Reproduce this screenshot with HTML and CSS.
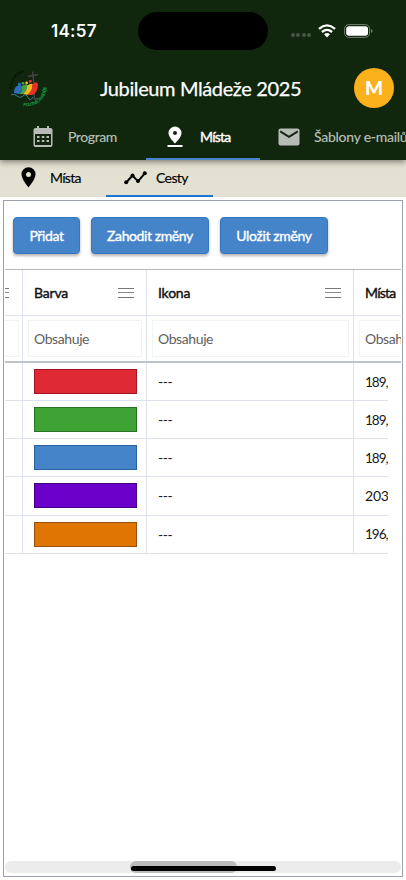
FILE: index.html
```
<!DOCTYPE html>
<html lang="cs">
<head>
<meta charset="utf-8">
<title>Jubileum Mládeže 2025</title>
<link rel="stylesheet" href="styles.css">
</head>
<body>
<header class="top">
  <div class="status">
    <span class="clock">14:57</span>
    <span class="island"></span>
    <span class="dots"><i></i><i></i><i></i><i></i></span>
    <svg class="wifi" width="18" height="14" viewBox="0 0 18 14" fill="none" stroke="#fff" stroke-width="2.3"><path d="M1 4.8Q9-2 17 4.8M3.9 8Q9 3.8 14.1 8"/><path d="M6 10.2Q9 7.8 12 10.2L9 13.4Z" fill="#fff" stroke="none"/></svg>
    <svg class="battery" width="29" height="14" viewBox="0 0 29 14"><rect x=".6" y=".6" width="25" height="12.8" rx="4.2" fill="none" stroke="#758072"/><rect x="2.2" y="2.2" width="21.8" height="9.6" rx="2.8" fill="#fff"/><path d="M27 5v4q1.5-.6 1.5-2T27 5" fill="#758072"/></svg>
  </div>
  <div class="brand">
    <svg class="logo" width="40" height="40" viewBox="0 0 40 40">
      <defs>
        <path id="arc-bottom" d="M14 38A20 20 0 0 0 37 13"/>
        <path id="arc-top" d="M2.500 21A17.500 17.500 0 0 1 20 3.200"/>
      </defs>
      <path d="M23.600 3.500L24.800 15M19 8.500l10-2M25 25l.5 6q2 0 3-1" fill="none" stroke="#454545" stroke-width="1.500"/>
      <path d="M5 25Q5 18 10 17Q15 17 13 21L10 26Z" fill="#2b6fc0"/>
      <path d="M10 26Q14 22 13 18Q17 15 20 18Q19 24 14 26Z" fill="#44a145"/>
      <path d="M14 26Q19 22 18 18Q22 14 25 17Q25 24 18 27Z" fill="#f2b820"/>
      <path d="M18 27Q24 22 23 17Q27 12 29 16Q29 25 23 27Z" fill="#e63225"/>
      <circle cx="10.400" cy="16" r="1.500" fill="#2b6fc0"/><circle cx="14" cy="15.300" r="1.400" fill="#44a145"/><circle cx="17.600" cy="15" r="1.400" fill="#f2b820"/><circle cx="21.300" cy="13.300" r="1.500" fill="#e63225"/>
      <path d="M2 27q3-2 6 1t6 0t5 1.500t5-.5" fill="none" stroke="#397c8c" stroke-width="1"/>
      <text class="motto"><textPath href="#arc-bottom">POUTNÍCI NADĚJE</textPath></text>
      <text class="year"><textPath href="#arc-top">JUBILEUM 2025</textPath></text>
    </svg>
    <h1>Jubileum Mládeže 2025</h1>
    <span class="avatar">M</span>
  </div>
  <nav class="tabs">
    <a class="tab program"><svg width="20" height="22" viewBox="0 0 20 22"><path fill="#b7bdb6" fill-rule="evenodd" d="M4 0h2v2h8V0h2v2h1.500Q19.500 2 19.500 4v15q0 2-2 2h-15q-2 0-2-2V4q0-2 2-2H4ZM2 8v11h16V8Z"/><path fill="#b7bdb6" d="M4 10h2.500v2H4zM8.800 10h2.500v2H8.800zM13.500 10H16v2h-2.500zM4 14h2.500v2H4zM8.800 14h2.500v2H8.800zM13.500 14H16v2h-2.500z"/></svg><span>Program</span></a>
    <a class="tab places active"><svg width="16" height="22" viewBox="0 0 16 22" fill="#fff"><path fill-rule="evenodd" d="M8 .5a6.500 6.500 0 0 0-6.500 6.500C1.500 11.500 8 17.500 8 17.500S14.500 11.500 14.500 7A6.500 6.500 0 0 0 8 .5Zm0 4.500a2 2 0 1 1 0 4 2 2 0 0 1 0-4Z"/><path d="M.5 19h15v2H.5z"/></svg><span>Místa</span></a>
    <a class="tab mails"><svg width="22" height="18" viewBox="0 0 22 18"><rect x=".5" y=".5" width="21" height="17" rx="2" fill="#b7bdb6"/><path d="M2.200 3.400L11 8.800l8.800-5.400" fill="none" stroke="#10260d" stroke-width="1.900"/></svg><span>Šablony e-mailů</span></a>
  </nav>
</header>
<nav class="subtabs">
  <a class="sub pin"><svg width="15" height="21" viewBox="0 0 15 21"><path fill-rule="evenodd" d="M7.500.3A7 7 0 0 0 .5 7.300C.5 12.500 7.500 20.300 7.500 20.300S14.500 12.500 14.500 7.300A7 7 0 0 0 7.500.3Zm0 4.600a2.500 2.500 0 1 1 0 5 2.500 2.500 0 0 1 0-5Z"/></svg><span>Místa</span></a>
  <a class="sub routes"><svg width="23" height="14" viewBox="0 0 23 14"><path d="M2.200 11.500L8.500 4.500l5.500 5.800L20.800 2.300" fill="none" stroke="#000" stroke-width="1.900"/><circle cx="2.200" cy="11.300" r="2"/><circle cx="8.500" cy="4.500" r="2"/><circle cx="14" cy="10" r="2"/><circle cx="20.800" cy="2.300" r="2"/></svg><span>Cesty</span></a>
</nav>
<main class="panel">
  <div class="toolbar">
    <button class="add"><span>Přidat</span></button>
    <button class="discard"><span>Zahodit změny</span></button>
    <button class="save"><span>Uložit změny</span></button>
  </div>
  <section class="table">
    <div class="row head"><div class="cell"><i class="menu"></i></div><div class="cell"><b>Barva</b><i class="menu"></i></div><div class="cell"><b>Ikona</b><i class="menu"></i></div><div class="cell"><b class="mista">Místa</b></div></div>
    <div class="row filter"><div class="cell"><span class="field"></span></div><div class="cell"><span class="field">Obsahuje</span></div><div class="cell"><span class="field">Obsahuje</span></div><div class="cell"><span class="field">Obsahuje</span></div></div>
    <div class="body">
      <div class="row"><div class="cell"></div><div class="cell"><span class="swatch red"></span></div><div class="cell dash">---</div><div class="cell num">189,</div></div>
      <div class="row"><div class="cell"></div><div class="cell"><span class="swatch green"></span></div><div class="cell dash">---</div><div class="cell num">189,</div></div>
      <div class="row"><div class="cell"></div><div class="cell"><span class="swatch blue"></span></div><div class="cell dash">---</div><div class="cell num">189,</div></div>
      <div class="row"><div class="cell"></div><div class="cell"><span class="swatch violet"></span></div><div class="cell dash">---</div><div class="cell num plain">203</div></div>
      <div class="row"><div class="cell"></div><div class="cell"><span class="swatch orange"></span></div><div class="cell dash">---</div><div class="cell num">196,</div></div>
    </div>
  </section>
  <div class="scroll"><span class="thumb"></span></div>
  <span class="home"></span>
</main>
</body>
</html>
```
FILE: styles.css
```
* { box-sizing: border-box; }
body { margin: 0; width: 406px; height: 880px; overflow: hidden; display: flex; flex-direction: column; background: #fff; font-family: Lato, "Open Sans", sans-serif; font-size: 14px; color: #181818; }
svg { display: block; flex: none; }

.top { flex: none; height: 160px; background: #10260d; color: #fff; position: relative; z-index: 1; box-shadow: 0 2px 6px rgba(0,0,0,.45); }
.status { height: 61px; display: flex; align-items: center; }
.clock { width: 87px; margin-left: 51px; font: 600 17px/20px Inter, sans-serif; letter-spacing: .3px; }
.island { width: 130px; height: 38px; border-radius: 19px; background: #000; }
.dots { display: flex; gap: 1.400px; margin: 8px 0 0 23px; width: 28px; }
.dots i { width: 4px; height: 4px; border-radius: 50%; background: #475744; }
.wifi { margin-left: -1px; }
.battery { margin-left: 8px; }
.brand { height: 54px; display: flex; align-items: center; }
.logo { margin-left: 9px; overflow: visible; }
.motto { font: 700 4.600px "Open Sans", sans-serif; letter-spacing: -.45px; fill: #179344; }
.year { font: 700 3px "Open Sans", sans-serif; fill: #010b03; }
h1 { margin: 0 0 0 51px; width: 254px; font-size: 20px; font-weight: 400; -webkit-text-stroke: .25px; line-height: 24px; letter-spacing: -.38px; white-space: nowrap; }
.avatar { width: 40px; height: 40px; border-radius: 50%; background: #fbb11b; text-align: center; font-size: 19px; font-weight: 900; line-height: 40px; }
.tabs { height: 45px; display: flex; overflow: hidden; }
.tab { flex: none; display: flex; align-items: center; height: 45px; color: #bac0b8; white-space: nowrap; letter-spacing: -.4px; -webkit-text-stroke: .15px; }
.tab span { padding-bottom: 2px; }
.program { width: 146px; padding-left: 33px; gap: 15px; }
.program svg { margin-top: -2px; }
.places { width: 114px; padding-left: 21px; gap: 17px; }
.active { color: #fff; letter-spacing: -.75px; -webkit-text-stroke: .4px; border-bottom: 2px solid #4684cc; }
.active span { padding-bottom: 0; }
.active svg { margin-top: 1px; }
.mails { width: 128px; padding-left: 18px; gap: 14px; letter-spacing: -.25px; }
.mails svg { margin-top: -2px; }

.subtabs { flex: none; display: flex; height: 37px; background: #e3e1d2; color: #000; -webkit-text-stroke: .15px; }
.sub { display: flex; align-items: center; height: 37px; }
.pin { width: 106px; padding-left: 21px; gap: 14px; letter-spacing: -.7px; }
.pin svg { margin-top: -2px; }
.pin span { padding-bottom: 2px; }
.routes { width: 107px; padding-left: 18px; gap: 9px; letter-spacing: -.6px; border-bottom: 2px solid #1976d2; }

.panel { flex: none; position: relative; margin: 3px 3px 0; height: 677px; width: 400px; border: 1px solid #9aa0af; display: flex; flex-direction: column; padding: 0 1px 3px; }
.toolbar { flex: none; height: 69px; display: flex; gap: 11px; padding: 16px 8px; border-bottom: 1px solid #b4b8bf; }
button { border: 1px solid #3478c4; border-radius: 4px; height: 37px; padding: 0; background: #4684ca; color: #fff; font: 400 14px/20px Lato, sans-serif; -webkit-text-stroke: .35px; white-space: nowrap; box-shadow: 0 2px 3px rgba(0,0,0,.3); }
.add { width: 67px; letter-spacing: -.4px; }
.discard { width: 118px; letter-spacing: -.4px; }
.save { width: 108px; letter-spacing: -.35px; }
.table { width: 396px; overflow: hidden; }
.row { display: grid; grid-template-columns: 18px 124px 207px 47px; height: 38.150px; border-bottom: 1px solid #dde2ec; }
.cell { overflow: hidden; display: flex; align-items: center; border-right: 1px solid #dde2ec; padding: 0 10px 0 11px; }
.cell:last-child { border-right: 0; padding-right: 0; }
.cell:first-child { padding: 0; }
.head { height: 46px; color: #111; font-size: 14px; }
.head b { font-weight: 400; -webkit-text-stroke: .4px; letter-spacing: -.2px; }
.head .mista { letter-spacing: -.75px; }
.head .cell { justify-content: space-between; }
.menu { flex: none; width: 16px; height: 10px; border-top: 1px solid #777; border-bottom: 1px solid #777; background: linear-gradient(#888,#888) 0 3px / 16px 1px no-repeat; }
.head .cell:nth-child(2) .menu, .head .cell:nth-child(3) .menu { margin-right: 2px; }
.cell:first-child .menu { margin-left: -12px; }
.filter { height: 47px; border-bottom: 2px solid #bfc3ca; color: #606060; }
.filter .cell { padding: 0 4px 0 5px; }
.filter .cell:first-child { padding: 0 3px 0 0; }
.filter .cell:last-child { padding-right: 0; }
.field { width: 100%; height: 37px; border: 1px solid #f2f3f5; padding-left: 5px; line-height: 35px; white-space: nowrap; letter-spacing: -.4px; overflow: hidden; }
.filter .cell:first-child .field { border-left: 0; }
.filter .cell:last-child .field { border-right: 0; }
.body { width: 383px; overflow: hidden; }
.swatch { width: 103px; height: 25px; border: 1px solid; flex: none; }
.red { background: #de2833; border-color: #a01425; }
.green { background: #3fa235; border-color: #287323; }
.blue { background: #4684ca; border-color: #285f9c; }
.violet { background: #6b00ca; border-color: #430083; }
.orange { background: #df7604; border-color: #98500d; }
.dash { letter-spacing: -.5px; }
.num { padding-left: 11px; font-size: 13.500px; letter-spacing: -1px; width: 35px; }
.plain { font-size: 14px; letter-spacing: -.2px; }
.scroll { flex: none; height: 12px; margin-top: auto; background: #ececec; border-radius: 6px; width: 396px; }
.thumb { display: block; width: 107px; height: 12px; border-radius: 6px; margin-left: 125px; background: #bcbcbc; }
.home { position: absolute; left: 127px; top: 665px; width: 145px; height: 5px; border-radius: 3px; background: #000; }
```
